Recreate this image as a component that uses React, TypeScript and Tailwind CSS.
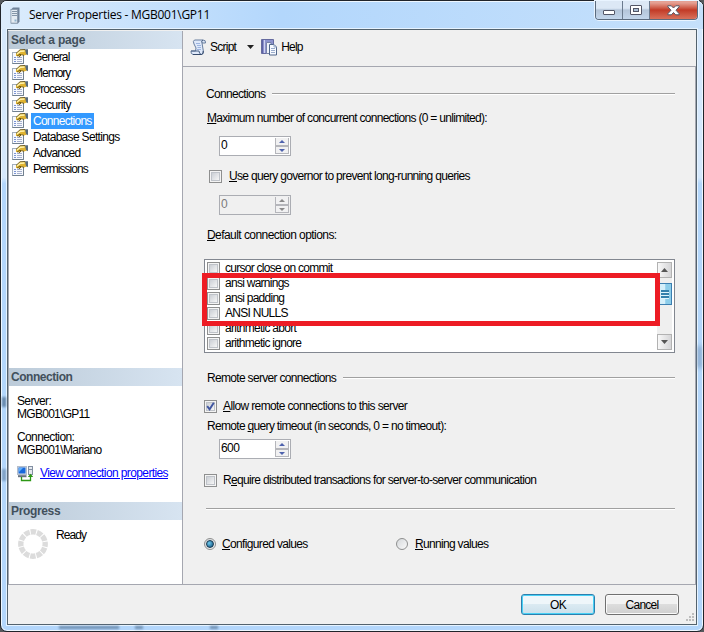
import { useState, ReactNode } from 'react'
import clsx from 'clsx'

const pages = [
  { name: 'General', tracking: 'tracking-[-0.9px]' },
  { name: 'Memory', tracking: 'tracking-[-1px]' },
  { name: 'Processors', tracking: 'tracking-[-0.85px]' },
  { name: 'Security', tracking: 'tracking-[-0.7px]' },
  { name: 'Connections', tracking: 'tracking-[-0.74px]' },
  { name: 'Database Settings', tracking: 'tracking-[-0.68px]' },
  { name: 'Advanced', tracking: 'tracking-[-0.75px]' },
  { name: 'Permissions', tracking: 'tracking-[-0.97px]' },
]

const options = [
  'cursor close on commit',
  'ansi warnings',
  'ansi padding',
  'ANSI NULLS',
  'arithmetic abort',
  'arithmetic ignore',
]

const ServerIcon = () => (
  <svg width="10" height="17" viewBox="0 0 10 17">
    <path d="M1 2.5 L3 .5 H9.5 V14.5 L8 16.5 H1Z" fill="#71839a" />
    <rect x=".9" y="2.4" width="6.6" height="13.7" fill="#e4ebf2" stroke="#8495a8" strokeWidth=".8" />
    <path d="M2 4.5H7M2 6.5H7M2 8.5H7" stroke="#8596a8" />
    <rect x="4.5" y="12.5" width="2" height="2" fill="#8fb3cd" />
  </svg>
)

const PageIcon = () => (
  <svg width="16" height="15" viewBox="0 0 16 15" className="shrink-0">
    <rect x=".5" y="3.5" width="11" height="11" fill="#f7f9fd" stroke="#a3afbd" />
    <path d="M.5 14.5H11.5V7" fill="none" stroke="#71808f" />
    <path d="M2 8.5H4M2 10.5H4M2 12.5H4" stroke="#7b95d4" />
    <path d="M5 8.5H10M5 10.5H10M5 12.5H10" stroke="#a6b0cd" />
    <path d="M4 4.5 L8 .8 L13 .5 L15 2 V5.5 L12 6.5 L10.5 5.5 L7.5 8 L6 7 L4 7Z" fill="#e0b32f" />
    <path d="M4 4.5 L8 .8 L13 .5M5 7.2L8 5L9 6L6.8 8M9.5 5.5L12 6.5" fill="none" stroke="#5e4d19" strokeWidth=".9" />
    <path d="M5 5 L8.5 2.2 L12.5 2" stroke="#fff3ae" strokeWidth="1.4" fill="none" />
    <path d="M13 .2H16V6.2L14 5Z" fill="#56697b" />
  </svg>
)

const ScriptIcon = () => (
  <svg width="17" height="17" viewBox="0 0 17 17">
    <path d="M4.5 1 H13 Q16 1 15.5 4 H12 L13.5 13 Q13.5 15.5 11 15.5 H3 Q.5 15 1 12 H5.5 L6 9 L4 5 Q2.5 2 4.5 1Z" fill="#dfe9fa" stroke="#687e9f" />
    <path d="M12 4 Q11 1.5 13 1M1 12 H9 Q9 15 11.5 15.5" fill="none" stroke="#4b6286" />
    <path d="M3 15.5H11.5Q13.5 15 13.2 12" fill="none" stroke="#34496a" />
    <path d="M6 4.5H10M7 6.5H11M7.5 8.5H11M7 10.5H11" stroke="#9cb4df" />
  </svg>
)

const HelpIcon = () => (
  <svg width="17" height="17" viewBox="0 0 17 17">
    <path d="M.5 .5 H12.5 V14.5 H.5Z" fill="#8d93cd" stroke="#656a9f" />
    <path d="M3.5 1V14" stroke="#d0d3f0" />
    <path d="M1.5 1V14" stroke="#5d63a5" />
    <path d="M5.5 3.5H10V14.5H5.5Z" fill="#eef2fa" stroke="#7883a8" />
    <path d="M8.5 5.5H13L15.5 8V16H8.5Z" fill="#f7faff" stroke="#50668a" />
    <path d="M13 5.5V8H15.5M10 9.5H14M10 11.5H14M10 13.5H14" fill="none" stroke="#9aaccb" />
  </svg>
)

const LinkIcon = () => (
  <svg width="17" height="16" viewBox="0 0 17 16">
    <rect x=".5" y=".5" width="9" height="8" fill="#d7dde7" stroke="#b4becb" />
    <rect x="1.5" y="1.5" width="7" height="6" fill="#1768dc" />
    <path d="M2 2H6L2 6Z" fill="#63b1fa" />
    <path d="M1 10.2H9.5" stroke="#66717f" strokeWidth="2" />
    <rect x="11.5" y=".5" width="4" height="8" fill="#e4e8ee" stroke="#8390a3" />
    <path d="M12 3.5H15" stroke="#8390a3" />
    <path d="M4.5 11V14.5H13.5V10" fill="none" stroke="#2d9815" strokeWidth="1.3" />
    <path d="M10.8 11L13.5 7.8L16.2 11Z" fill="#2d9815" />
  </svg>
)

// Idle state of the progress ring
const Spinner = () => (
  <svg width="30" height="30" viewBox="0 0 30 30">
    <circle cx="15" cy="15" r="12.2" fill="none" stroke="#dcdcdc" strokeWidth="5.4" strokeDasharray="5.4 .988" strokeDashoffset="2.7" />
  </svg>
)

const PanelHeader = ({ children }: { children: ReactNode }) => (
  <div className="h-[18px] pl-[2px] bg-linear-to-r from-[#bccbd9] to-[#d7e4f1] text-[12px] leading-[18px] font-bold text-[#42505c]">
    {children}
  </div>
)

const Checkbox = ({ checked = false }: { checked?: boolean }) => (
  <span className="block size-[13px] shrink-0 border border-[#8e8f8f] bg-[#f4f4f4] p-[1px]">
    <span className="block size-[9px] border border-[#bfc3c9] bg-linear-to-br from-[#cbcfd5] to-[#f6f6f6]">
      {checked && (
        <svg width="9" height="9" viewBox="0 0 9 9" className="-m-px">
          <path d="M1.2 4.2L3.6 7.3L7.8 .8" fill="none" stroke="#3f55a0" strokeWidth="1.9" />
        </svg>
      )}
    </span>
  </span>
)

const Radio = ({ checked, onClick }: { checked: boolean; onClick: () => void }) => (
  <button onClick={onClick} className="flex size-3 shrink-0 items-center justify-center rounded-full border border-[#8e8f8f] bg-linear-to-br from-[#d5d8db] to-[#fafafa]">
    {checked && <span className="size-2 rounded-full border border-[#17384f] bg-radial-[at_35%_35%] from-[#6fcbf0] to-[#0b4a75]" />}
  </button>
)

const NumberInput = ({ value, disabled = false }: { value: string; disabled?: boolean }) => (
  <div className={clsx('flex h-5 w-[72px] border border-[#abadb3] pr-[1px] py-[1px]', disabled ? 'bg-[#f0f0f0] text-[#7b7b7b]' : 'bg-white')}>
    <span className="flex-1 pl-[1px] text-[12px] leading-[14px] tracking-[-0.6px]">{value}</span>
    <div className="flex w-[14px] flex-col gap-[2px] border-x border-b border-[#b5b6bb] bg-[#b5b6bb]">
      <span className="flex h-[7px] items-center justify-center bg-[#f1f1f2]">
        <svg width="6" height="3"><path d="M0 3L3 0L6 3Z" fill={disabled ? '#8a8a8a' : '#4e62ad'} /></svg>
      </span>
      <span className="flex h-[6px] items-center justify-center bg-[#f1f1f2]">
        <svg width="6" height="3"><path d="M0 0H6L3 3Z" fill={disabled ? '#8a8a8a' : '#4e62ad'} /></svg>
      </span>
    </div>
  </div>
)

const Rule = () => <span className="h-[2px] flex-1 border-t border-[#a0a0a0] bg-white" />

const ScrollBar = () => (
  <div className="flex w-[15px] flex-col bg-[#efefef]">
    <span className="flex h-4 items-center justify-center border border-[#b2b2b2] bg-linear-to-r from-[#f8f8f8] to-[#d5d5d7]">
      <svg width="7" height="4"><path d="M0 4L3.5 0L7 4Z" fill="#555" /></svg>
    </span>
    <span className="mt-[5px] flex h-[22px] flex-col items-center justify-center border border-[#3c7fb1] bg-linear-to-r from-[#d5effa] from-50% to-[#8ccdea] to-60%">
      <i className="h-[3px] w-2 border-b border-[#dff4fc] bg-[#3381ad]" />
      <i className="h-[3px] w-2 border-b border-[#dff4fc] bg-[#3381ad]" />
      <i className="h-[3px] w-2 border-b border-[#dff4fc] bg-[#3381ad]" />
    </span>
    <span className="mt-auto flex h-4 items-center justify-center border border-[#b2b2b2] bg-linear-to-r from-[#f8f8f8] to-[#d5d5d7]">
      <svg width="7" height="4"><path d="M0 0H7L3.5 4Z" fill="#555" /></svg>
    </span>
  </div>
)

const TitleBar = () => (
  <div className="flex h-[28px] justify-between rounded-t-[6px] bg-linear-to-r from-[#dcecfc] via-[#b3d7fc] via-40% to-[#c5e0fb] shadow-[inset_0_1px_0_#eef7ff]">
    <div className="flex pl-[9px] pt-[6px]">
      <ServerIcon />
      <span className="ml-[9px] font-['Open_Sans','Noto_Sans',sans-serif] text-[12px] leading-[16px] tracking-[-0.26px]">Server Properties - MGB001\GP11</span>
    </div>
    <div className="mr-[5px] flex h-[19px] overflow-hidden rounded-b-[4px] border border-t-0 border-[#5b6b7e] shadow-[0_0_0_1px_#e9f4ff]">
      <button className="flex w-[27px] items-center justify-center border-r border-[#6b7b8e] bg-linear-to-b from-[#dce8f5] from-40% via-[#b4c5d9] via-50% to-[#c3d6eb]">
        <svg width="12" height="16"><rect x=".5" y="8.5" width="11" height="4" rx=".5" fill="#fff" stroke="#535666" /></svg>
      </button>
      <button className="flex w-[27px] items-center justify-center border-r border-[#6b7b8e] bg-linear-to-b from-[#dce8f5] from-40% via-[#b4c5d9] via-50% to-[#c3d6eb]">
        <svg width="12" height="11">
          <rect x=".5" y=".5" width="11" height="9" rx=".5" fill="#fff" stroke="#535666" />
          <rect x="3.5" y="3.5" width="5" height="3" fill="#a9bed4" stroke="#535666" />
        </svg>
      </button>
      <button className="flex w-[47px] items-center justify-center bg-linear-to-b from-[#e5a093] from-10% via-[#c23a26] via-50% to-[#d9705a]">
        <svg width="13" height="11">
          <path d="M.8 .8H4.3L6.5 3L8.7 .8H12.2V1.7L9 5.2L12.2 8.8V9.8H8.7L6.5 7.5L4.3 9.8H.8V8.8L4 5.2L.8 1.7Z" fill="#fff" stroke="#535666" />
        </svg>
      </button>
    </div>
  </div>
)

const Sidebar = () => {
  const [selected, setSelected] = useState('Connections')

  return (
    <div className="flex w-[175px] flex-col border-x border-l-[#a5a7b0] border-r-[#a5a7b0] bg-white">
      <PanelHeader><span className="tracking-[-0.2px]">Select a page</span></PanelHeader>
      <div className="h-[319px]">
        {pages.map(page => (
          <div key={page.name} className="flex h-4 items-start pl-[3px]" onClick={() => setSelected(page.name)}>
            <PageIcon />
            <span className={clsx('ml-[3px] h-4 px-[2px] leading-[17px]', page.tracking, selected === page.name && 'bg-[#3399ff] text-white')}>
              {page.name}
            </span>
          </div>
        ))}
      </div>
      <PanelHeader><span className="tracking-[-0.45px]">Connection</span></PanelHeader>
      <div className="h-[116px] pl-[8px] pt-[9px] leading-[13px]">
        <p className="tracking-[-0.65px]">Server:</p>
        <p className="tracking-[-0.72px]">MGB001\GP11</p>
        <p className="mt-[10px] tracking-[-0.62px]">Connection:</p>
        <p className="tracking-[-0.68px]">MGB001\Mariano</p>
        <div className="mt-[9px] flex">
          <LinkIcon />
          <a className="ml-[6px] pt-[1px] tracking-[-0.61px] text-[#0000ff] underline">View connection properties</a>
        </div>
      </div>
      <PanelHeader><span className="tracking-[-0.35px]">Progress</span></PanelHeader>
      <div className="flex pl-[9px] pt-[8px]">
        <div className="pt-[1px]"><Spinner /></div>
        <span className="ml-[8px] leading-[14px] tracking-[-0.9px]">Ready</span>
      </div>
    </div>
  )
}

const Settings = () => {
  const [values, setValues] = useState('configured')

  return (
    <div className="flex-1 border-t border-r border-[#a5a7b0] pl-[21px] pr-[20px] leading-[14px]">
      <div className="mt-[20px] flex h-[14px] items-center gap-[7px] pl-[2px]">
        <span className="tracking-[-0.68px]">Connections</span>
        <Rule />
      </div>
      <p className="mt-[10px] pl-[3px] tracking-[-0.7px]"><u>M</u>aximum number of concurrent connections (0 = unlimited):</p>
      <div className="mt-[11px] pl-[15px]"><NumberInput value="0" /></div>
      <div className="mt-[13px] flex h-[14px] items-center gap-[7px] pl-[5px]">
        <Checkbox />
        <span className="tracking-[-0.68px]"><u>U</u>se query governor to prevent long-running queries</span>
      </div>
      <div className="mt-[12px] pl-[15px]"><NumberInput value="0" disabled /></div>
      <p className="mt-[13px] pl-[3px] tracking-[-0.56px]"><u>D</u>efault connection options:</p>

      <div className="relative mt-[17px] flex h-[94px] w-[471px] justify-between border border-[#828790] bg-white p-[2px] pt-[1px]">
        <div>
          {options.map(option => (
            <div key={option} className="flex h-[15px] items-center gap-[5px]">
              <Checkbox />
              <span className="pb-[2px] tracking-[-0.73px]">{option}</span>
            </div>
          ))}
        </div>
        <div className="flex pt-[1px]"><ScrollBar /></div>
        <div className="absolute -left-[3px] top-[13px] h-[53px] w-[458px] border-[5px] border-[#ed1c24]" />
      </div>

      <div className="mt-[18px] flex h-[14px] items-center gap-[7px] pl-[3px]">
        <span className="tracking-[-0.68px]">Remote server connections</span>
        <Rule />
      </div>
      <div className="mt-[14px] flex h-[14px] items-center gap-[6px]">
        <Checkbox checked />
        <span className="tracking-[-0.63px]"><u>A</u>llow remote connections to this server</span>
      </div>
      <p className="mt-[6px] pl-[3px] tracking-[-0.68px]">Remote <u>q</u>uery timeout (in seconds, 0 = no timeout):</p>
      <div className="mt-[6px] pl-[15px]"><NumberInput value="600" /></div>
      <div className="mt-[14px] flex h-[14px] items-center gap-[6px]">
        <Checkbox />
        <span className="tracking-[-0.67px]">R<u>e</u>quire distributed transactions for server-to-server communication</span>
      </div>
      <div className="mt-[21px] flex pl-[2px]"><Rule /></div>
      <div className="mt-[27px] flex h-[14px] items-center">
        <div className="flex w-48 items-center gap-[6px]">
          <Radio checked={values === 'configured'} onClick={() => setValues('configured')} />
          <span className="tracking-[-0.65px]"><u>C</u>onfigured values</span>
        </div>
        <div className="flex items-center gap-[7px]">
          <Radio checked={values === 'running'} onClick={() => setValues('running')} />
          <span className="tracking-[-0.68px]"><u>R</u>unning values</span>
        </div>
      </div>
    </div>
  )
}

const App = () => (
  <div className="h-[632px] w-[704px] overflow-hidden bg-[#55585c]">
    <div className="relative flex h-full flex-col rounded-[7px] border border-[#20242a] bg-linear-to-b from-[#d5e8fc] from-28% to-[#b3d6fb] to-29% shadow-[inset_0_0_0_1px_#eef7ff]">
      <TitleBar />
      <div className="mx-[6px] flex h-[596px] flex-col border border-[#53626d] bg-[#f0f0f0] font-['Liberation_Sans',Arial,sans-serif] text-[12px] text-black shadow-[0_0_0_1px_#e6f3ff]">
        <div className="flex h-[555px] border-b border-[#a5a7b0] pt-[1px]">
          <Sidebar />
          <div className="flex flex-1 flex-col">
            <div className="flex h-[35px] items-center pb-[3px] pl-[7px]">
              <ScriptIcon />
              <span className="ml-[3px] tracking-[-0.75px]">Script</span>
              <svg width="7" height="4" className="ml-[11px]"><path d="M0 0H7L3.5 4Z" fill="#222" /></svg>
              <span className="ml-[7px]"><HelpIcon /></span>
              <span className="ml-[3px] tracking-[-0.8px]">Help</span>
            </div>
            <Settings />
          </div>
        </div>
        <div className="relative flex flex-1 justify-end gap-[10px] pr-[17px] pt-[9px]">
          <button className="h-[21px] w-[74px] rounded-[3px] border border-[#2c7fae] bg-linear-to-b from-[#eff6fa] from-45% via-[#dbeaf2] via-50% to-[#cbe0eb] shadow-[inset_0_0_0_1px_#48d0f5] tracking-[-0.7px]">OK</button>
          <button className="h-[21px] w-[74px] rounded-[3px] border border-[#707070] bg-linear-to-b from-[#f2f2f2] from-45% via-[#dddddd] via-50% to-[#cfcfcf] shadow-[inset_0_0_0_1px_#fafafa] tracking-[-0.75px]">Cancel</button>
          <svg width="9" height="9" className="absolute bottom-[2px] right-[1px]">
            <path d="M6 0h2v2h-2zM3 3h2v2h-2zM6 3h2v2h-2zM0 6h2v2h-2zM3 6h2v2h-2zM6 6h2v2h-2z" fill="#bdbdbd" />
          </svg>
        </div>
      </div>
      {/* Blurred desktop showing through the glass border */}
      <div className="absolute bottom-[2px] left-[58px] h-[3px] w-[60px] bg-[#7191b3] blur-[1px]" />
      <div className="absolute bottom-[2px] left-[134px] h-[3px] w-[8px] bg-[#7191b3] blur-[1px]" />
      <div className="absolute bottom-[2px] left-[209px] h-[3px] w-[8px] bg-[#7191b3] blur-[1px]" />
      <div className="absolute left-[1px] top-[396px] h-[10px] w-[4px] bg-[#6787aa] blur-[1px]" />
      <div className="absolute left-[1px] top-[468px] h-[12px] w-[4px] bg-[#7f9fc2] blur-[1px]" />
      <div className="absolute right-[2px] top-[345px] h-[22px] w-[3px] bg-[#7593b5] blur-[2px]" />
    </div>
  </div>
)

export default App
